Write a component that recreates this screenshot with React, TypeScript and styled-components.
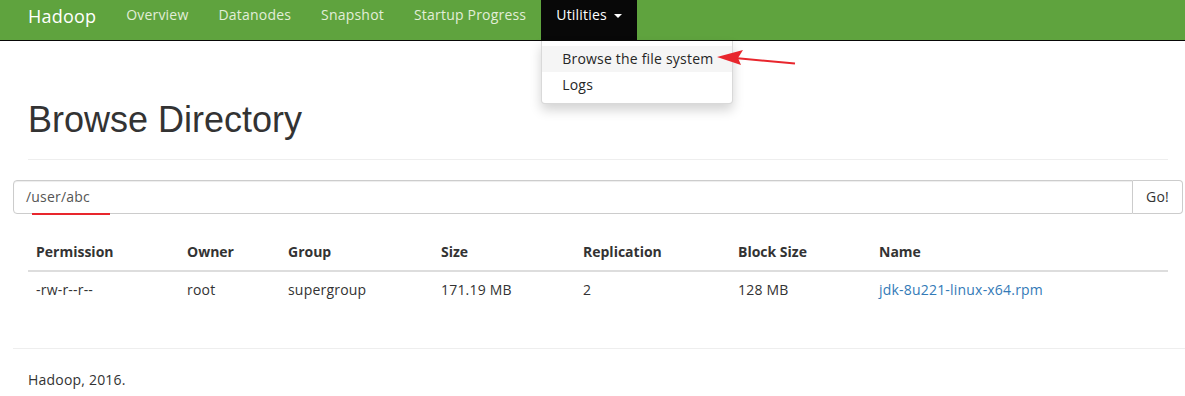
import React from "react";
import styled, { createGlobalStyle } from "styled-components";

const GlobalStyle = createGlobalStyle`
  html, body { margin: 0; padding: 0; background: #fff; }
  body {
    font-family: "Open Sans", "Noto Sans", sans-serif;
    font-size: 14px;
    line-height: 20px;
    letter-spacing: 0.2px;
    color: #333;
  }
  * { box-sizing: border-box; }
`;

const Page = styled.div`
  position: relative;
  width: 1185px;
  height: 396px;
  overflow: hidden;
`;

const Navbar = styled.nav`
  display: flex;
  align-items: stretch;
  height: 41px;
  background: #5fa33e;
  border-bottom: 1px solid #080808;
  padding-left: 13px;
`;

const Brand = styled.a`
  display: block;
  padding: 4px 15px 0;
  font-size: 18px;
  line-height: 24px;
  color: #fff;
  text-decoration: none;
`;

const NavItem = styled.div<{ $open?: boolean }>`
  position: relative;
  display: flex;
  align-items: flex-start;
  padding: 5px 15px 0;
  height: 40px;
  line-height: 20px;
  color: ${(p) => (p.$open ? "#fff" : "#e2eed8")};
  background: ${(p) => (p.$open ? "#080808" : "transparent")};
`;

const Caret = styled.span`
  display: inline-block;
  margin: 9px 0 0 7px;
  width: 0;
  height: 0;
  border-top: 4px solid #fff;
  border-left: 4px solid transparent;
  border-right: 4px solid transparent;
`;

const Dropdown = styled.ul`
  position: absolute;
  top: 41px;
  left: 0;
  margin: 0;
  padding: 5px 0;
  list-style: none;
  width: 192px;
  background: #fff;
  border: 1px solid rgba(0, 0, 0, 0.15);
  border-top: none;
  border-radius: 0 0 4px 4px;
  box-shadow: 0 6px 12px rgba(0, 0, 0, 0.175);
  z-index: 5;
`;

const DropItem = styled.li<{ $hover?: boolean }>`
  padding: 3px 20px;
  line-height: 20px;
  color: #262626;
  white-space: nowrap;
  background: ${(p) => (p.$hover ? "#f5f5f5" : "#fff")};
`;

const Container = styled.div`
  padding: 0 17px 0 28px;
`;

const PageHeader = styled.div`
  margin: 59px 0 20px;
  padding-bottom: 9px;
  border-bottom: 1px solid #eee;
`;

const H1 = styled.h1`
  margin: 0 0 10px;
  font-family: "Liberation Sans", Arial, sans-serif;
  font-weight: 500;
  font-size: 36px;
  line-height: 40px;
  letter-spacing: 0;
  color: #333;
`;

const InputGroup = styled.div`
  position: relative;
  display: flex;
  margin: 0 -15px;
  height: 34px;
`;

const PathInput = styled.div`
  flex: 1;
  border: 1px solid #ccc;
  border-radius: 4px 0 0 4px;
  padding: 6px 12px;
  line-height: 20px;
  color: #555;
  box-shadow: inset 0 1px 1px rgba(0, 0, 0, 0.075);
`;

const GoButton = styled.div`
  width: 50px;
  border: 1px solid #ccc;
  border-left: none;
  border-radius: 0 4px 4px 0;
  padding: 6px 0;
  text-align: center;
  line-height: 20px;
  color: #333;
  background: #fff;
`;

const Underline = styled.div`
  position: absolute;
  left: 19px;
  top: 33px;
  width: 78px;
  height: 2px;
  background: #e8262d;
`;

const Table = styled.table`
  width: 100%;
  margin: 20px 0;
  border-collapse: collapse;
  border-spacing: 0;
  table-layout: fixed;
`;

const Th = styled.th<{ $w?: number }>`
  width: ${(p) => (p.$w ? `${p.$w}px` : "auto")};
  text-align: left;
  padding: 8px;
  line-height: 20px;
  font-weight: 700;
  letter-spacing: 0;
  border-bottom: 2px solid #ddd;
`;

const Td = styled.td`
  padding: 8px 8px 10px;
  line-height: 20px;
`;

const FileLink = styled.a`
  color: #337ab7;
  text-decoration: none;
`;

const Footer = styled.footer`
  margin: 38px 0 0 13px;
  padding-left: 15px;
  border-top: 1px solid #eee;
  padding-top: 21px;
`;

const FooterText = styled.p`
  margin: 0;
  line-height: 20px;
`;

const ArrowSvg = styled.svg`
  position: absolute;
  left: 700px;
  top: 44px;
  z-index: 10;
`;

const cols: [string, number][] = [
  ["Permission", 151],
  ["Owner", 101],
  ["Group", 153],
  ["Size", 142],
  ["Replication", 155],
  ["Block Size", 141],
  ["Name", 0],
];

export default function App() {
  return (
    <Page>
      <GlobalStyle />
      <Navbar>
        <Brand>Hadoop</Brand>
        <NavItem>Overview</NavItem>
        <NavItem>Datanodes</NavItem>
        <NavItem>Snapshot</NavItem>
        <NavItem>Startup Progress</NavItem>
        <NavItem $open>
          Utilities
          <Caret />
          <Dropdown>
            <DropItem $hover>Browse the file system</DropItem>
            <DropItem>Logs</DropItem>
          </Dropdown>
        </NavItem>
      </Navbar>
      <ArrowSvg width="110" height="30" viewBox="0 0 110 30">
        <line x1="95" y1="19.5" x2="35" y2="14" stroke="#e8262d" strokeWidth="2" />
        <polygon points="17,13 43,6 38,14 41,21" fill="#e8262d" />
      </ArrowSvg>
      <Container>
        <PageHeader>
          <H1>Browse Directory</H1>
        </PageHeader>
        <InputGroup>
          <PathInput>/user/abc</PathInput>
          <GoButton>Go!</GoButton>
          <Underline />
        </InputGroup>
        <Table>
          <thead>
            <tr>
              {cols.map(([c, w]) => (
                <Th key={c} $w={w || undefined}>
                  {c}
                </Th>
              ))}
            </tr>
          </thead>
          <tbody>
            <tr>
              <Td>-rw-r--r--</Td>
              <Td>root</Td>
              <Td>supergroup</Td>
              <Td>171.19 MB</Td>
              <Td>2</Td>
              <Td>128 MB</Td>
              <Td>
                <FileLink>jdk-8u221-linux-x64.rpm</FileLink>
              </Td>
            </tr>
          </tbody>
        </Table>
      </Container>
      <Footer>
        <FooterText>Hadoop, 2016.</FooterText>
      </Footer>
    </Page>
  );
}
